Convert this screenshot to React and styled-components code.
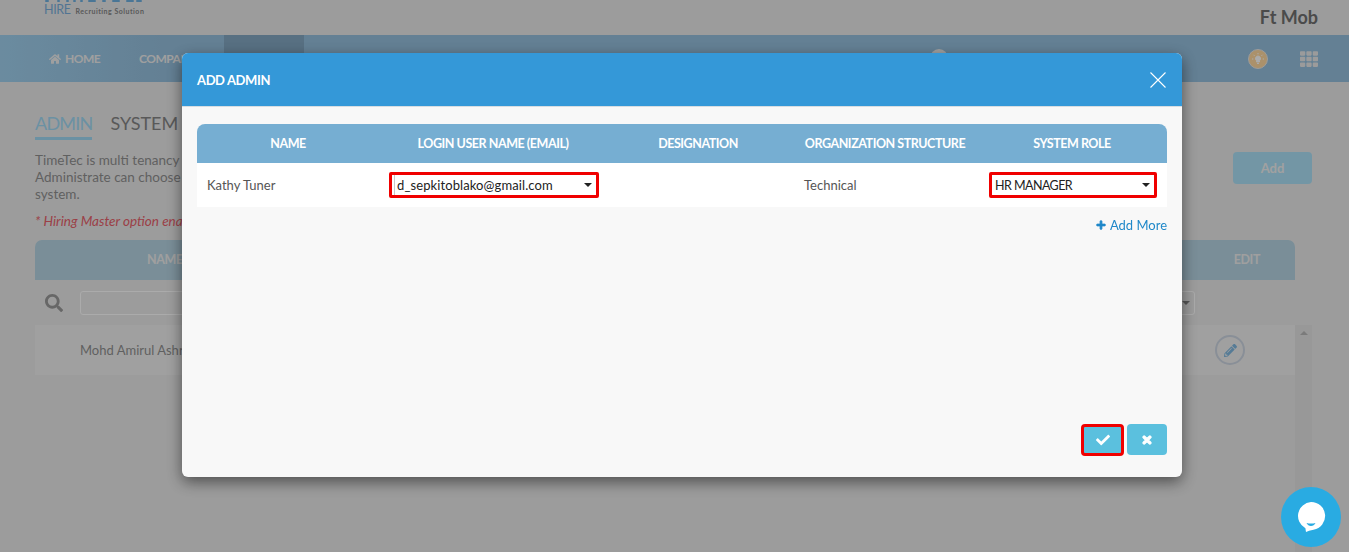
import React from "react";
import styled, { createGlobalStyle } from "styled-components";
import { FaHome, FaSearch, FaPencilAlt, FaCheck, FaTimes, FaPlus, FaTh, FaInfo } from "react-icons/fa";

const FONT = `"Lato", "Open Sans", "Liberation Sans", sans-serif`;

const GlobalStyle = createGlobalStyle`
  html, body {
    margin: 0;
    padding: 0;
    height: 100%;
    overflow: hidden;
    background: #e9e9e9;
    font-family: ${FONT};
  }
  * { box-sizing: border-box; }
`;

const Page = styled.div`
  width: 1349px;
  height: 552px;
  overflow: hidden;
  color: #909090;
`;

const TopBar = styled.div`
  height: 35px;
  padding: 0 31px 0 44px;
  display: flex;
  justify-content: space-between;
`;

const Logo = styled.div`
  display: flex;
  flex-direction: column;
  gap: 0;
`;

const LogoLine = styled.div`
  display: flex;
  align-items: baseline;
  gap: 5px;
  margin-top: 0;
`;

const LogoHire = styled.span`
  font-size: 12.5px;
  letter-spacing: -0.4px;
  color: #7aaedb;
`;

const LogoTag = styled.span`
  font-size: 7px;
  font-weight: 700;
  letter-spacing: 0.5px;
  color: #858585;
`;

const UserName = styled.div`
  font-size: 18px;
  font-weight: 700;
  color: #707070;
  padding-top: 6px;
`;

const Nav = styled.div`
  height: 47px;
  display: flex;
  align-items: center;
  padding-left: 29px;
  background: linear-gradient(90deg, #a0d0ee 0%, #95bfdd 12%, #95bfdd 100%);
`;

const NavItem = styled.div`
  height: 100%;
  width: ${(p) => p.$w}px;
  padding-left: 20px;
  display: flex;
  align-items: center;
  gap: 4px;
  font-size: 12px;
  font-weight: 700;
  letter-spacing: -0.5px;
  color: #eeeeee;
  background: ${(p) => (p.$active ? "#83a7c2" : "transparent")};
  white-space: nowrap;
`;

const InfoDot = styled.div`
  width: 18px;
  height: 18px;
  margin-top: -2px;
  border-radius: 50%;
  background: #eeeeee;
  display: flex;
  align-items: center;
  justify-content: center;
  color: #6f8fa8;
`;

const NavIcons = styled.div`
  margin-left: auto;
  display: flex;
  align-items: center;
  gap: 32px;
  padding-right: 31px;
`;

const Bulb = styled.div`
  width: 20px;
  height: 20px;
  border-radius: 50%;
  background: #ffd9a0;
  border: 1px solid #e8e8e8;
  display: flex;
  align-items: center;
  justify-content: center;
`;

const Content = styled.div`
  padding: 28px 37px 0 35px;
`;

const TabRow = styled.div`
  display: flex;
  gap: 18px;
  font-size: 18px;
`;

const Tab = styled.div`
  height: 30px;
  line-height: 27px;
  letter-spacing: ${(p) => (p.$active ? "-0.8px" : "0")};
  color: ${(p) => (p.$active ? "#a0d8f4" : "#858585")};
  border-bottom: ${(p) => (p.$active ? "3px solid #a0d8f4" : "none")};
`;

const IntroRow = styled.div`
  display: flex;
  justify-content: space-between;
  margin-top: 12px;
`;

const Intro = styled.div`
  font-size: 13.5px;
  line-height: 17px;
  width: 600px;
`;

const AddButton = styled.div`
  width: 79px;
  height: 32px;
  border-radius: 4px;
  background: #ace0f6;
  color: #f0f0f0;
  font-size: 13px;
  font-weight: 700;
  display: flex;
  align-items: center;
  justify-content: center;
`;

const Note = styled.div`
  margin-top: 10px;
  font-size: 13.5px;
  line-height: 17px;
  font-style: italic;
  color: #e8606a;
`;

const ListHead = styled.div`
  margin-top: 10px;
  width: 1260px;
  height: 40px;
  padding: 0 35px 1px 112px;
  border-radius: 7px 7px 0 0;
  background: #b6d4e3;
  color: #eeeeee;
  font-size: 12.5px;
  font-weight: 700;
  letter-spacing: -0.4px;
  display: flex;
  align-items: center;
  justify-content: space-between;
`;

const Filters = styled.div`
  width: 1260px;
  height: 45px;
  display: flex;
  align-items: center;
  padding: 0 100px 0 10px;
  gap: 17px;
`;

const FilterInput = styled.div`
  flex: 1;
  height: 24px;
  border: 1px solid #ffffff;
  border-radius: 3px;
  display: flex;
  align-items: center;
  justify-content: flex-end;
  padding-right: 4px;
`;

const ListBody = styled.div`
  display: flex;
  width: 1277px;
`;

const ListRow = styled.div`
  width: 1260px;
  height: 50px;
  padding: 0 50px 0 45px;
  background: #efefef;
  display: flex;
  align-items: center;
  justify-content: space-between;
  font-size: 13px;
`;

const EditCircle = styled.div`
  width: 30px;
  height: 30px;
  border-radius: 50%;
  border: 2px solid #ccd5e2;
  display: flex;
  align-items: center;
  justify-content: center;
  color: #80b8e0;
`;

const ScrollTrack = styled.div`
  width: 17px;
  height: 230px;
  background: #e3e3e3;
  display: flex;
  justify-content: center;
  padding-top: 6px;
`;

const ScrollArrow = styled.div`
  width: 0;
  height: 0;
  border-left: 4px solid transparent;
  border-right: 4px solid transparent;
  border-bottom: 4px solid #b8b8b8;
`;

const Overlay = styled.div`
  position: fixed;
  inset: 0;
  background: rgba(0, 0, 0, 0.33);
`;

const Modal = styled.div`
  position: fixed;
  left: 182px;
  top: 53px;
  width: 1000px;
  height: 424px;
  border-radius: 6px;
  background: #f8f8f8;
  box-shadow: 0 5px 15px rgba(0, 0, 0, 0.5);
  display: flex;
  flex-direction: column;
  overflow: hidden;
`;

const ModalHead = styled.div`
  height: 54px;
  flex: none;
  padding: 0 15px;
  background: #3498d8;
  border-bottom: 1px solid #d6dde2;
  display: flex;
  align-items: center;
  justify-content: space-between;
  color: #fff;
  font-size: 13px;
  font-weight: 700;
  letter-spacing: -0.4px;
`;

const ModalBody = styled.div`
  flex: 1;
  padding: 17px 15px 21px;
  display: flex;
  flex-direction: column;
`;

const Columns = styled.div`
  display: grid;
  grid-template-columns: 182px 228px 182px 192px 182px;
  padding-right: 4px;
`;

const TableHead = styled(Columns)`
  height: 39px;
  padding-bottom: 1px;
  align-items: center;
  background: #76aed2;
  border-radius: 8px 8px 0 0;
  color: #fff;
  font-size: 12.5px;
  font-weight: 700;
  letter-spacing: -0.45px;
  text-align: center;
`;

const TableRow = styled(Columns)`
  height: 44px;
  align-items: center;
  background: #fff;
  font-size: 13px;
  color: #555;
`;

const Cell = styled.div`
  padding-left: ${(p) => p.$pad || 0}px;
`;

const SelectBox = styled.div`
  height: 26px;
  width: ${(p) => p.$w}px;
  margin-left: ${(p) => p.$left}px;
  border: 3px solid #f00000;
  border-radius: 2px;
  background: #fff;
  color: #222;
  display: flex;
  align-items: center;
  justify-content: space-between;
  padding: 0 4px 0 ${(p) => p.$pad}px;
`;

const SelectValue = styled.span`
  align-self: stretch;
  display: flex;
  align-items: center;
  padding-left: ${(p) => (p.$line ? 2 : 0)}px;
  border-left: ${(p) => (p.$line ? "1px solid #c8c8c8" : "none")};
  font-size: ${(p) => p.$size}px;
  letter-spacing: ${(p) => p.$spacing}px;
`;

const Arrow = styled.span`
  width: 0;
  height: 0;
  border-left: 4px solid transparent;
  border-right: 4px solid transparent;
  border-top: 4px solid ${(p) => p.$color || "#222"};
`;

const AddMore = styled.div`
  align-self: flex-end;
  margin-top: 10px;
  display: flex;
  align-items: center;
  gap: 4px;
  color: #1f88c9;
  font-size: 13px;
`;

const Actions = styled.div`
  margin-top: auto;
  display: flex;
  justify-content: flex-end;
  gap: 3px;
`;

const ActionButton = styled.div`
  width: ${(p) => (p.$marked ? 43 : 40)}px;
  height: ${(p) => (p.$marked ? 32 : 31)}px;
  border-radius: 4px;
  background: #5bc0de;
  border: ${(p) => (p.$marked ? "3px solid #f00000" : "none")};
  display: flex;
  align-items: center;
  justify-content: center;
  color: #fff;
`;

const ChatBubble = styled.div`
  position: fixed;
  left: 1281px;
  top: 487px;
  width: 60px;
  height: 60px;
  border-radius: 50%;
  background: #29abe2;
  display: flex;
  align-items: center;
  justify-content: center;
`;

const navItems = [
  ["COMPANY", 105],
  ["HIRE", 80, true],
  ["TEMPLATE", 110],
  ["JOB POSTING", 110],
  ["APPROVAL", 98],
  ["APPLICANT", 99],
  ["REPORT", 84],
  ["SUPPORT", 125],
];

// bottom edge of the logo, the rest is cut off by the top of the window
const logoStems = [
  [1, 4], [13, 3], [22, 3], [29, 3], [36, 3], [44, 8], [58, 4], [68, 8], [82, 8], [92, 6],
];

function App() {
  return (
    <>
      <GlobalStyle />
      <Page>
        <TopBar>
          <Logo>
            <svg width="100" height="2" viewBox="0 0 100 2" fill="#6fb0e0">
              {logoStems.map(([x, w]) => (
                <rect key={x} x={x} y="0" width={w} height="2" rx="1" />
              ))}
            </svg>
            <LogoLine>
              <LogoHire>HIRE</LogoHire>
              <LogoTag>Recruiting Solution</LogoTag>
            </LogoLine>
          </Logo>
          <UserName>Ft Mob</UserName>
        </TopBar>
        <Nav>
          <NavItem $w={90}>
            <FaHome size={12} /> HOME
          </NavItem>
          {navItems.map(([label, w, active]) => (
            <NavItem key={label} $w={w} $active={active}>
              {label}
            </NavItem>
          ))}
          <InfoDot>
            <FaInfo size={9} />
          </InfoDot>
          <NavIcons>
            <Bulb>
              <svg width="14" height="14" viewBox="0 0 14 14" fill="none" stroke="#fff" strokeWidth="1">
                <path d="M7 4a2.6 2.6 0 0 0-1.5 4.7V10h3V8.700A2.600 2.600 0 0 0 7 4Z" fill="#fff" />
                <path d="M6 11.500h2M7 1v1.300M2.500 2.800l1 1M11.500 2.800l-1 1M1 7h1.300M11.700 7H13" />
              </svg>
            </Bulb>
            <FaTh size={18} color="#e8e8e8" />
          </NavIcons>
        </Nav>
        <Content>
          <TabRow>
            <Tab $active>ADMIN</Tab>
            <Tab>SYSTEM ROLE</Tab>
          </TabRow>
          <IntroRow>
            <Intro>
              TimeTec is multi tenancy system
              <br />
              Administrate can choose
              <br />
              system.
            </Intro>
            <AddButton>Add</AddButton>
          </IntroRow>
          <Note>* Hiring Master option enabled</Note>
          <ListHead>
            <span>NAME</span>
            <span>EDIT</span>
          </ListHead>
          <Filters>
            <FaSearch size={18} color="#9a9a9a" />
            <FilterInput>
              <Arrow $color="#808080" />
            </FilterInput>
          </Filters>
          <ListBody>
            <ListRow>
              <span>Mohd Amirul Ashraf</span>
              <EditCircle>
                <FaPencilAlt size={13} />
              </EditCircle>
            </ListRow>
            <ScrollTrack>
              <ScrollArrow />
            </ScrollTrack>
          </ListBody>
        </Content>
      </Page>
      <Overlay />
      <Modal>
        <ModalHead>
          ADD ADMIN
          <svg width="18" height="18" viewBox="0 0 18 18" stroke="#fff" strokeWidth="1.100">
            <path d="M1.500 1.500l15 15M16.500 1.500l-15 15" />
          </svg>
        </ModalHead>
        <ModalBody>
          <TableHead>
            <div>NAME</div>
            <div>LOGIN USER NAME (EMAIL)</div>
            <div>DESIGNATION</div>
            <div>ORGANIZATION STRUCTURE</div>
            <div>SYSTEM ROLE</div>
          </TableHead>
          <TableRow>
            <Cell $pad={10}>Kathy Tuner</Cell>
            <SelectBox $w={210} $left={10} $pad={2}>
              <SelectValue $line $size={13} $spacing={0.1}>d_sepkitoblako@gmail.com</SelectValue>
              <Arrow />
            </SelectBox>
            <Cell />
            <Cell $pad={15}>Technical</Cell>
            <SelectBox $w={168} $left={8} $pad={3}>
              <SelectValue $size={12.5} $spacing={-0.55}>HR MANAGER</SelectValue>
              <Arrow />
            </SelectBox>
          </TableRow>
          <AddMore>
            <FaPlus size={10} stroke="currentColor" strokeWidth={40} /> Add More
          </AddMore>
          <Actions>
            <ActionButton $marked>
              <FaCheck size={14} />
            </ActionButton>
            <ActionButton>
              <FaTimes size={12} stroke="currentColor" strokeWidth={50} />
            </ActionButton>
          </Actions>
        </ModalBody>
      </Modal>
      <ChatBubble>
        <svg width="30" height="32" viewBox="0 0 30 32">
          <path d="M15 1a14 14 0 0 1 2.500 27.800q-5 .8-7.500 2.200l-.6-3.700A14 14 0 0 1 15 1Z" fill="#fff" />
          <path d="M10.500 22q4.500 1.200 9 0q-1.500 3-4.500 3t-4.500-3Z" fill="#29abe2" />
        </svg>
      </ChatBubble>
    </>
  );
}

export default App;
